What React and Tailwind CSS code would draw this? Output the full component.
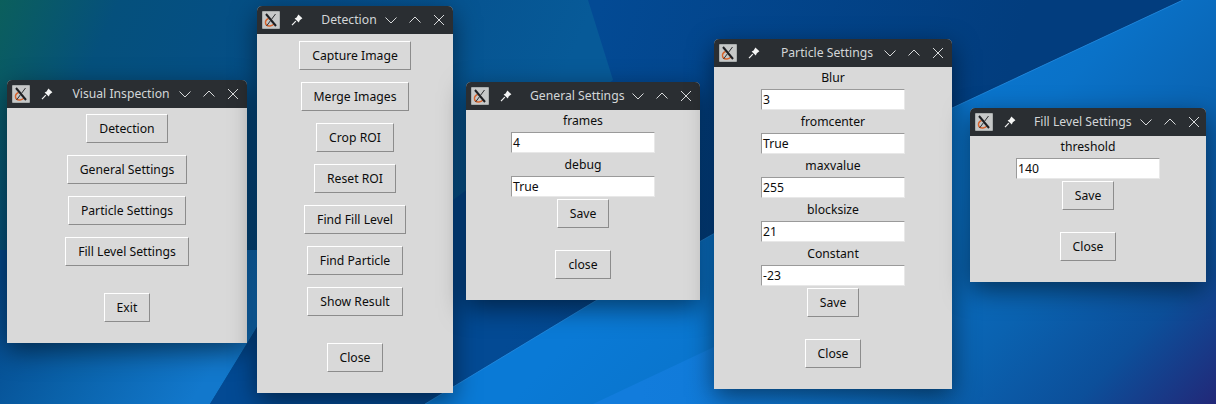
const font = { fontFamily: '"Noto Sans", sans-serif' }

function XIcon() {
  return (
    <svg width="18" height="18" viewBox="0 0 18 18" className="shrink-0">
      <rect x="0" y="0" width="18" height="18" rx="1" fill="#a9adad" />
      <rect x="1" y="1" width="16" height="16" fill="#c6c8c8" />
      <path d="M6.5 7.5 C2 9.5 2.5 15.5 8 15 C10 14.8 11 14 12 13" stroke="#d8632c" strokeWidth="1.4" fill="none" />
      <path d="M4 3 L14 15" stroke="#1d1f22" strokeWidth="2" fill="none" />
      <path d="M13.5 3 L4.5 15" stroke="#2c2e31" strokeWidth="1" fill="none" />
    </svg>
  )
}

function PinIcon() {
  return (
    <svg width="12" height="12" viewBox="0 0 12 12" className="shrink-0">
      <path d="M7.4 0.6 L11.4 4.2 L8.8 6.2 L7.8 8.4 L3.6 4.6 L5.6 3.4 Z" fill="#f4f5f5" />
      <path d="M4.8 7.2 L1 11.2" stroke="#f4f5f5" strokeWidth="1.2" fill="none" />
    </svg>
  )
}

function TitleButtons() {
  return (
    <div className="w-[76px] pr-[8px] shrink-0 flex items-center justify-end gap-[12px] text-[#d8dadb]">
      <svg width="12" height="12" viewBox="0 0 12 12"><path d="M0.5 3.5 L6 9 L11.5 3.5" stroke="currentColor" fill="none" /></svg>
      <svg width="12" height="12" viewBox="0 0 12 12"><path d="M0.5 8.5 L6 3 L11.5 8.5" stroke="currentColor" fill="none" /></svg>
      <svg width="12" height="12" viewBox="0 0 12 12"><path d="M1 1 L11 11 M11 1 L1 11" stroke="currentColor" fill="none" /></svg>
    </div>
  )
}

function TkButton({ children, className = '' }) {
  return (
    <button className={`h-[29px] px-[12px] pt-[2px] text-[12.2px] text-[#0c0c0c] bg-[#d9d9d9] border border-t-white border-l-white border-r-[#8c8c8c] border-b-[#8c8c8c] ${className}`}>
      {children}
    </button>
  )
}

function Field({ label, value }) {
  return (
    <>
      <div className="h-[22px] leading-[21px] text-[12.2px] text-[#0c0c0c]">{label}</div>
      <div className="w-[144px] h-[21px] mb-[1px] leading-[20px] pl-[1px] text-[12.2px] text-[#0c0c0c] bg-white border border-t-[#9a9a9a] border-l-[#9a9a9a] border-r-[#e8e8e8] border-b-[#e8e8e8]">
        {value}
      </div>
    </>
  )
}

function Window({ title, left, top, width, height, children }) {
  return (
    <div
      className="absolute flex flex-col rounded-t-[5px] bg-[#d9d9d9] shadow-[0_8px_26px_rgba(0,0,0,0.5)]"
      style={{ left, top, width, height }}
    >
      <div className="h-[28px] shrink-0 flex items-center rounded-t-[5px] bg-[#2a2e32]">
        <div className="w-[64px] shrink-0 flex items-center gap-[11px] pl-[5px]">
          <XIcon />
          <PinIcon />
        </div>
        <div className="flex-1 text-center text-[12.2px] text-[#d3d6d8] whitespace-nowrap">{title}</div>
        <TitleButtons />
      </div>
      <div className="flex-1 flex flex-col items-center">{children}</div>
    </div>
  )
}

function Wallpaper() {
  return (
    <svg className="absolute inset-0" width="1216" height="404" viewBox="0 0 1216 404">
      <defs>
        <linearGradient id="base" gradientUnits="userSpaceOnUse" x1="0" y1="0" x2="500" y2="220">
          <stop offset="0" stopColor="#0b5f5c" />
          <stop offset="0.2" stopColor="#05507c" />
          <stop offset="0.55" stopColor="#054e8a" />
          <stop offset="1" stopColor="#075a98" />
        </linearGradient>
        <linearGradient id="navy" gradientUnits="userSpaceOnUse" x1="600" y1="0" x2="1000" y2="110">
          <stop offset="0" stopColor="#034a94" />
          <stop offset="1" stopColor="#023d7e" />
        </linearGradient>
        <linearGradient id="bright" gradientUnits="userSpaceOnUse" x1="850" y1="50" x2="1216" y2="404">
          <stop offset="0" stopColor="#0a7ad6" />
          <stop offset="0.35" stopColor="#0a72c8" />
          <stop offset="0.6" stopColor="#0a62b0" />
          <stop offset="0.8" stopColor="#0c4f9a" />
          <stop offset="1" stopColor="#222878" />
        </linearGradient>
        <linearGradient id="low" gradientUnits="userSpaceOnUse" x1="0" y1="280" x2="190" y2="404">
          <stop offset="0" stopColor="#04488a" />
          <stop offset="0.5" stopColor="#0a62aa" />
          <stop offset="1" stopColor="#1278cc" />
        </linearGradient>
        <linearGradient id="sheen" gradientUnits="userSpaceOnUse" x1="640" y1="0" x2="960" y2="0">
          <stop offset="0" stopColor="#127cdc" />
          <stop offset="1" stopColor="#127cdc" stopOpacity="0" />
        </linearGradient>
      </defs>
      <rect width="1216" height="404" fill="url(#base)" />
      <path d="M0 404 L0 250 L300 250 L257 327 L210 404 Z" fill="url(#low)" />
      <path d="M588 0 L1183 0 L950 109 L715 233 L597 300 L453 387 L425 404 L210 404 L257 327 L453 200 L613 80 Z" fill="url(#navy)" />
      <path d="M425 404 L453 387 L597 300 L715 233 L950 109 L1183 0 L1216 0 L1216 404 Z" fill="url(#bright)" />
      <path d="M593 404 L714 347 L960 250 L960 404 Z" fill="url(#sheen)" />
      <path d="M425 404 L453 387 L597 300 L715 233 L950 109 L1183 0" stroke="#2a90e6" strokeOpacity="0.7" fill="none" />
    </svg>
  )
}

export default function App() {
  return (
    <div className="relative w-[1216px] h-[404px] overflow-hidden" style={font}>
      <Wallpaper />

      <Window title="Visual Inspection" left={7} top={80} width={240} height={263}>
        <div className="flex flex-col items-center gap-[12px] pt-[6px]">
          <TkButton>Detection</TkButton>
          <TkButton>General Settings</TkButton>
          <TkButton>Particle Settings</TkButton>
          <TkButton>Fill Level Settings</TkButton>
          <TkButton className="mt-[15px]">Exit</TkButton>
        </div>
      </Window>

      <Window title="Detection" left={257} top={6} width={196} height={387}>
        <div className="flex flex-col items-center gap-[12px] pt-[7px]">
          <TkButton>Capture Image</TkButton>
          <TkButton>Merge Images</TkButton>
          <TkButton>Crop ROI</TkButton>
          <TkButton>Reset ROI</TkButton>
          <TkButton>Find Fill Level</TkButton>
          <TkButton>Find Particle</TkButton>
          <TkButton>Show Result</TkButton>
          <TkButton className="mt-[15px]">Close</TkButton>
        </div>
      </Window>

      <Window title="General Settings" left={466} top={82} width={234} height={218}>
        <Field label="frames" value="4" />
        <Field label="debug" value="True" />
        <TkButton className="mt-[1px]">Save</TkButton>
        <TkButton className="mt-[22px]">close</TkButton>
      </Window>

      <Window title="Particle Settings" left={714} top={39} width={238} height={350}>
        <Field label="Blur" value="3" />
        <Field label="fromcenter" value="True" />
        <Field label="maxvalue" value="255" />
        <Field label="blocksize" value="21" />
        <Field label="Constant" value="-23" />
        <TkButton className="mt-[1px]">Save</TkButton>
        <TkButton className="mt-[22px]">Close</TkButton>
      </Window>

      <Window title="Fill Level Settings" left={970} top={108} width={236} height={174}>
        <Field label="threshold" value="140" />
        <TkButton className="mt-[1px]">Save</TkButton>
        <TkButton className="mt-[22px]">Close</TkButton>
      </Window>
    </div>
  )
}
